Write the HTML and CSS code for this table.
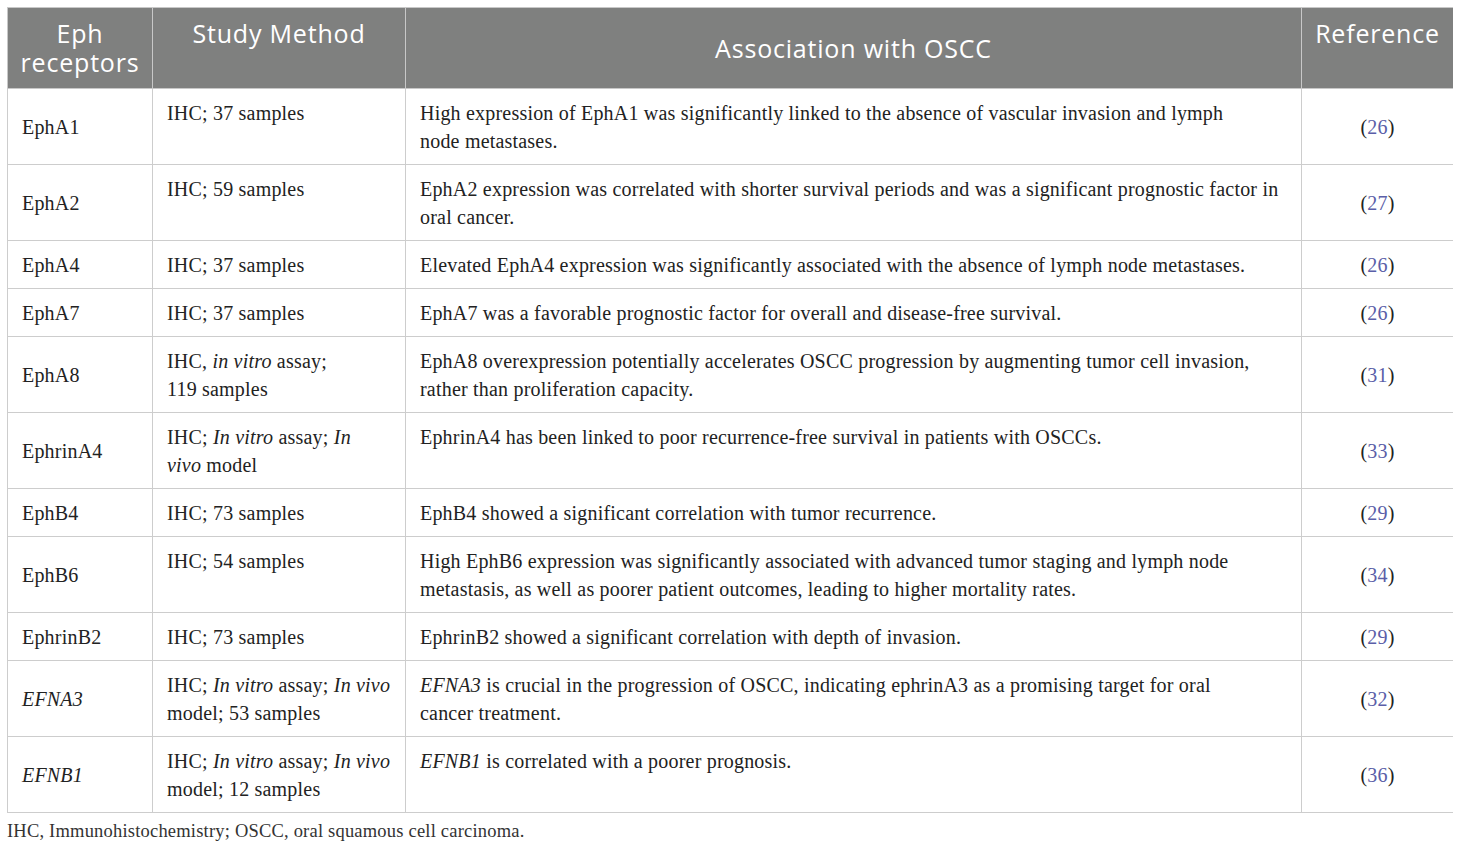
FILE: index.html
```html
<!DOCTYPE html>
<html lang="en">
<head>
  <meta charset="UTF-8" />
  <title>Eph receptors in OSCC</title>
  <link rel="stylesheet" href="styles.css">
</head>
<body>
  <table class="eph-table">
    <colgroup>
      <col class="c-name">
      <col class="c-method">
      <col class="c-assoc">
      <col class="c-ref">
    </colgroup>
    <thead>
      <tr>
        <th class="mid">Eph<br>receptors</th>
        <th class="top">Study Method</th>
        <th class="mid">Association with OSCC</th>
        <th class="top">Reference</th>
      </tr>
    </thead>
    <tbody>
      <tr>
        <td class="name">EphA1</td>
        <td>IHC; 37 samples</td>
        <td>High expression of EphA1 was significantly linked to the absence of vascular invasion and lymph<br>node metastases.</td>
        <td class="ref">(<a href="#">26</a>)</td>
      </tr>
      <tr>
        <td class="name">EphA2</td>
        <td>IHC; 59 samples</td>
        <td>EphA2 expression was correlated with shorter survival periods and was a significant prognostic factor in<br>oral cancer.</td>
        <td class="ref">(<a href="#">27</a>)</td>
      </tr>
      <tr>
        <td class="name">EphA4</td>
        <td>IHC; 37 samples</td>
        <td>Elevated EphA4 expression was significantly associated with the absence of lymph node metastases.</td>
        <td class="ref">(<a href="#">26</a>)</td>
      </tr>
      <tr>
        <td class="name">EphA7</td>
        <td>IHC; 37 samples</td>
        <td>EphA7 was a favorable prognostic factor for overall and disease-free survival.</td>
        <td class="ref">(<a href="#">26</a>)</td>
      </tr>
      <tr>
        <td class="name">EphA8</td>
        <td>IHC, <i>in vitro</i> assay;<br>119 samples</td>
        <td>EphA8 overexpression potentially accelerates OSCC progression by augmenting tumor cell invasion,<br>rather than proliferation capacity.</td>
        <td class="ref">(<a href="#">31</a>)</td>
      </tr>
      <tr>
        <td class="name">EphrinA4</td>
        <td>IHC; <i>In vitro</i> assay; <i>In</i><br><i>vivo</i> model</td>
        <td>EphrinA4 has been linked to poor recurrence-free survival in patients with OSCCs.</td>
        <td class="ref">(<a href="#">33</a>)</td>
      </tr>
      <tr>
        <td class="name">EphB4</td>
        <td>IHC; 73 samples</td>
        <td>EphB4 showed a significant correlation with tumor recurrence.</td>
        <td class="ref">(<a href="#">29</a>)</td>
      </tr>
      <tr>
        <td class="name">EphB6</td>
        <td>IHC; 54 samples</td>
        <td>High EphB6 expression was significantly associated with advanced tumor staging and lymph node<br>metastasis, as well as poorer patient outcomes, leading to higher mortality rates.</td>
        <td class="ref">(<a href="#">34</a>)</td>
      </tr>
      <tr>
        <td class="name">EphrinB2</td>
        <td>IHC; 73 samples</td>
        <td>EphrinB2 showed a significant correlation with depth of invasion.</td>
        <td class="ref">(<a href="#">29</a>)</td>
      </tr>
      <tr>
        <td class="name"><i>EFNA3</i></td>
        <td>IHC; <i>In vitro</i> assay; <i>In vivo</i><br>model; 53 samples</td>
        <td><i>EFNA3</i> is crucial in the progression of OSCC, indicating ephrinA3 as a promising target for oral<br>cancer treatment.</td>
        <td class="ref">(<a href="#">32</a>)</td>
      </tr>
      <tr>
        <td class="name"><i>EFNB1</i></td>
        <td>IHC; <i>In vitro</i> assay; <i>In vivo</i><br>model; 12 samples</td>
        <td><i>EFNB1</i> is correlated with a poorer prognosis.</td>
        <td class="ref">(<a href="#">36</a>)</td>
      </tr>
    </tbody>
  </table>
  <p class="footnote">IHC, Immunohistochemistry; OSCC, oral squamous cell carcinoma.</p>
</body>
</html>
```

FILE: styles.css
```css
* {
  box-sizing: border-box;
}

body {
  margin: 7px;
  background: #fff;
  color: #222;
  font-family: "Liberation Serif", "Times New Roman", serif;
}

.eph-table {
  width: 1446px;
  border-collapse: collapse;
  table-layout: fixed;
}

.c-name { width: 145px; }
.c-method { width: 253px; }
.c-assoc { width: 896px; }
.c-ref { width: 152px; }

.eph-table th {
  background: #7f807f;
  color: #fff;
  font-family: "Open Sans", "Noto Sans", sans-serif;
  font-weight: 400;
  font-size: 25px;
  line-height: 29px;
  letter-spacing: 0.8px;
  text-align: center;
  padding: 11px 4px 11px;
  border: 1px solid #c8c8c8;
  height: 80px;
}

.eph-table th.top {
  vertical-align: top;
}

.eph-table th.mid {
  vertical-align: middle;
}

.eph-table td {
  font-size: 20px;
  line-height: 28px;
  letter-spacing: 0.2px;
  padding: 10px 14px 9px;
  border: 1px solid #cdcdcd;
  vertical-align: top;
  text-align: left;
}

.eph-table td.name {
  vertical-align: middle;
}

.eph-table td.ref {
  vertical-align: middle;
  text-align: center;
}

.ref a {
  color: #5a5ea8;
  text-decoration: none;
}

.footnote {
  margin: 5px 0 0;
  font-size: 18.5px;
  line-height: 26px;
  letter-spacing: 0.2px;
  color: #333;
}
```
